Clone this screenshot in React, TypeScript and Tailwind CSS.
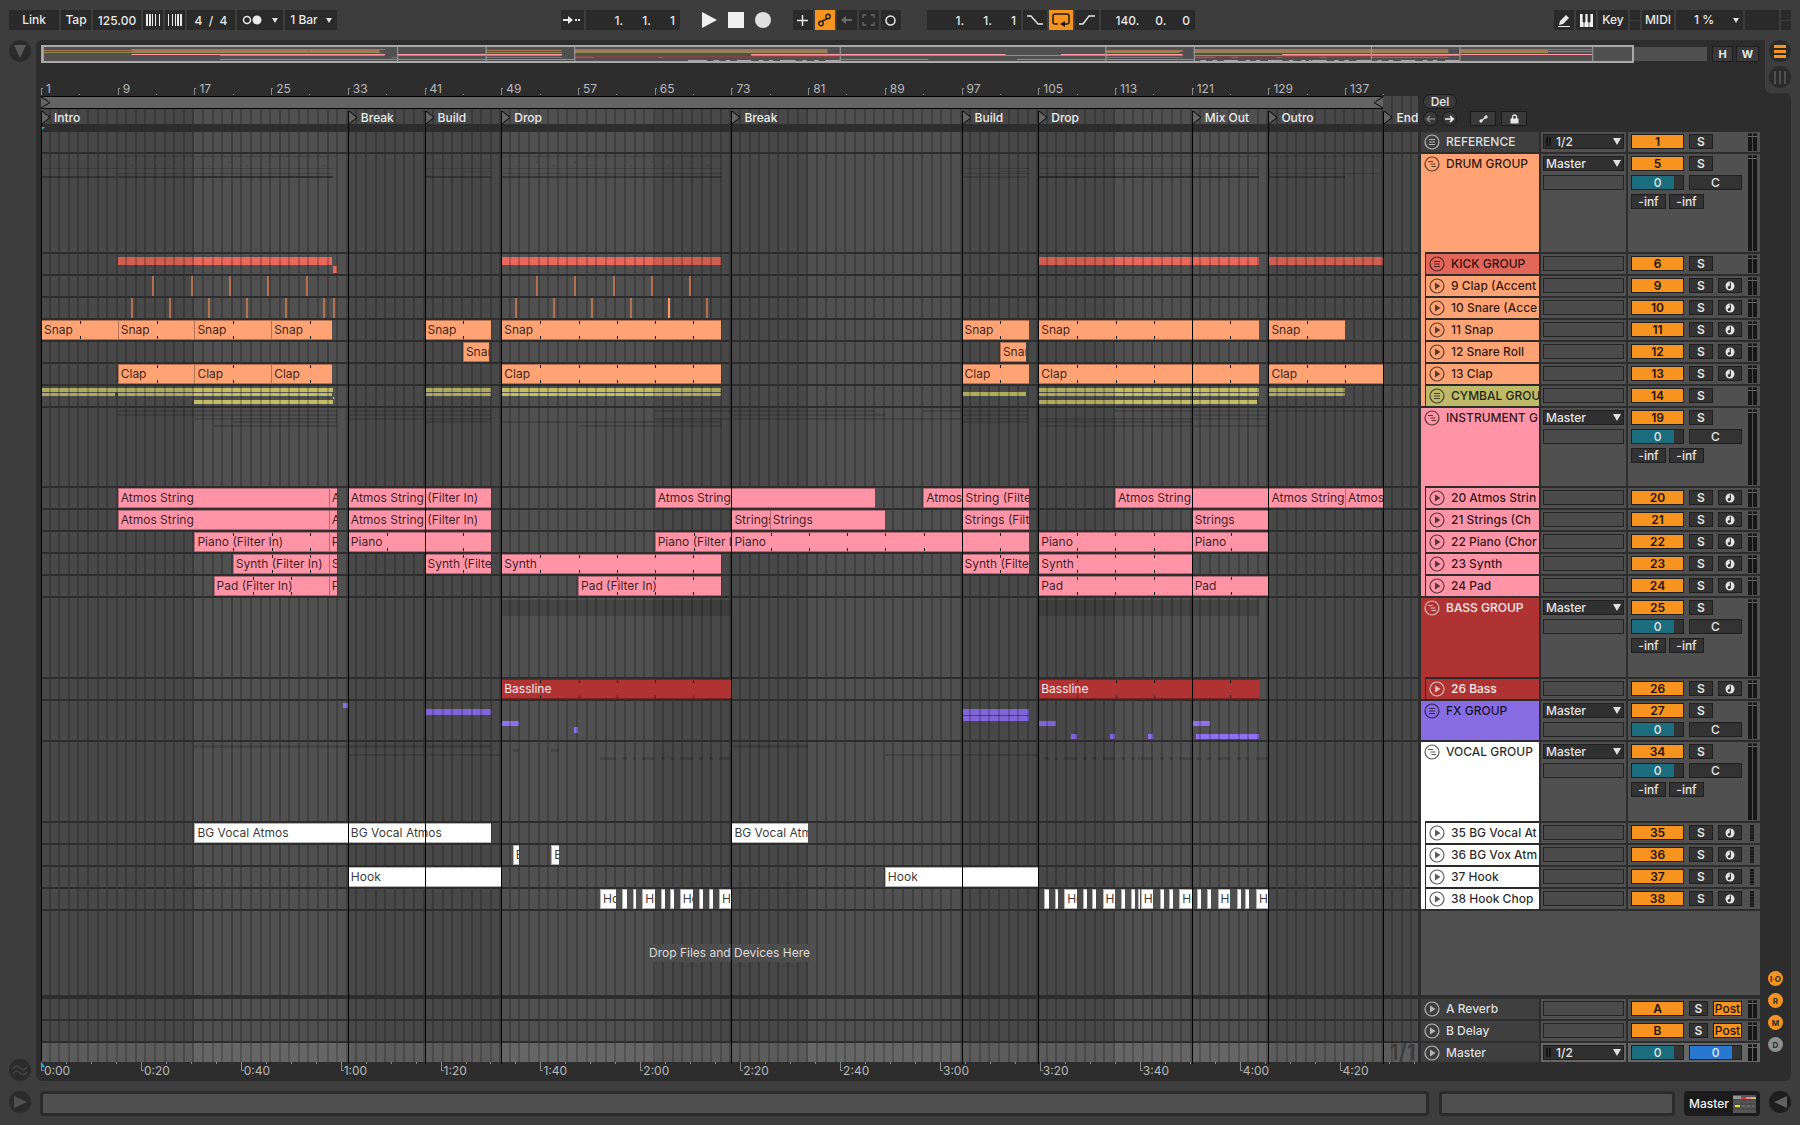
import { type FC, type ReactNode } from "react";
import clsx from "clsx";

const BARS = 143.6;
const BARS_PER_SECOND = 125 / 240;

type Clip = [start: number, end: number, name?: string];
type Strip = [start: number, end: number, top: number, height: number];

interface Track {
  id: string;
  name: string;
  kind: "group" | "folded" | "child" | "return" | "master" | "plain";
  height: string;
  color: string;
  text?: string;
  parent?: string;
  last?: boolean;
  loop?: boolean;
  clips?: Clip[];
  strips?: Strip[];
  stripBg?: string;
  hits?: number[];
  mini?: [top: number, height: number];
  output?: string;
  rec?: boolean;
  dotted?: boolean;
  fader?: number;
  overview?: [top: number, color: string];
}

const ROW = "h-[22px]";
const DRUM = "bg-[#ffa374]";
const PINK = "bg-[#ff94a6]";
const RED = "bg-[#af3333]";
const WHITE = "bg-white";

const drumTracks: Track[] = [
  {
    id: "6", name: "KICK GROUP", kind: "folded", height: ROW, color: "bg-[#e2675a]", parent: DRUM,
    stripBg: "bg-[#e8695c]", mini: [2, 1], overview: [2, "#b5695c"],
    strips: [[9, 31.4, 3, 8], [31.4, 31.9, 12, 7], [49, 71.9, 3, 8], [105, 128, 3, 8], [129, 141, 3, 8]],
  },
  {
    id: "9", name: "9 Clap (Accent", kind: "child", height: ROW, color: DRUM, parent: DRUM, rec: true, mini: [8, 1],
    hits: [12.6, 16.6, 20.6, 24.6, 28.6, 52.6, 56.6, 60.6, 64.6, 68.6],
  },
  {
    id: "10", name: "10 Snare (Acce", kind: "child", height: ROW, color: DRUM, parent: DRUM, rec: true, mini: [11, 1],
    hits: [10.4, 14.4, 18.4, 22.4, 26.4, 30.4, 31.4, 50.4, 54.4, 58.4, 62.4, 66.4, 70.4],
  },
  {
    id: "11", name: "11 Snap", kind: "child", height: ROW, color: DRUM, parent: DRUM, rec: true, loop: true, mini: [14, 1],
    overview: [3, "#a8765b"],
    clips: [[1, 9, "Snap"], [9, 17, "Snap"], [17, 25, "Snap"], [25, 31.4, "Snap"], [41, 47.9, "Snap"], [49, 71.9, "Snap"], [97, 104, "Snap"], [105, 128, "Snap"], [129, 137, "Snap"]],
  },
  {
    id: "12", name: "12 Snare Roll", kind: "child", height: ROW, color: DRUM, parent: DRUM, rec: true, mini: [17, 1],
    clips: [[45, 47.7, "Snare Roll"], [101, 103.7, "Snare Roll"]],
  },
  {
    id: "13", name: "13 Clap", kind: "child", height: ROW, color: DRUM, parent: DRUM, rec: true, loop: true, mini: [19, 1],
    overview: [4, "#a8765b"],
    clips: [[9, 17, "Clap"], [17, 25, "Clap"], [25, 31.4, "Clap"], [49, 71.9, "Clap"], [97, 104, "Clap"], [105, 128, "Clap"], [129, 141, "Clap"]],
  },
  {
    id: "14", name: "CYMBAL GROU", kind: "folded", height: ROW, color: "bg-[#bfba69]", parent: DRUM, last: true,
    stripBg: "bg-[#c3be66]", mini: [22, 2], overview: [5, "#8f8c50"],
    strips: [
      [1, 31.4, 2, 4], [1, 8.7, 7, 3], [9, 31.4, 7, 3], [17, 31.4, 14, 4], [31.4, 31.5, 11, 2],
      [41, 47.9, 2, 4], [41, 47.9, 7, 3], [49, 71.9, 2, 4], [49, 71.9, 7, 3], [97, 103.7, 6, 4],
      [105, 128, 2, 4], [105, 128, 7, 3], [105, 127.8, 14, 4], [129, 137, 2, 4], [129, 137, 7, 3],
    ],
  },
];

const instrumentTracks: Track[] = [
  {
    id: "20", name: "20 Atmos Strin", kind: "child", height: ROW, color: PINK, parent: PINK, rec: true, mini: [2, 2],
    overview: [7, "#ff94a6"],
    clips: [[9, 31, "Atmos String"], [31, 31.9, "Atmos"], [33, 47.9, "Atmos String (Filter In)"], [65, 88, "Atmos String"], [93, 104, "Atmos String (Filter In)"], [113, 129, "Atmos String"], [129, 137, "Atmos String"], [137, 141, "Atmos"]],
  },
  {
    id: "21", name: "21 Strings (Ch", kind: "child", height: ROW, color: PINK, parent: PINK, rec: true, mini: [6, 2],
    clips: [[9, 31, "Atmos String"], [31, 31.9, "Atmos"], [33, 47.9, "Atmos String (Filter In)"], [73, 77, "Strings"], [77, 89, "Strings"], [97, 104, "Strings (Filter In)"], [121, 129, "Strings"]],
  },
  {
    id: "22", name: "22 Piano (Chor", kind: "child", height: ROW, color: PINK, parent: PINK, rec: true, loop: true, mini: [10, 2],
    overview: [8, "#c07582"],
    clips: [[17, 31, "Piano (Filter In)"], [31, 31.9, "Piano"], [33, 47.9, "Piano"], [65, 73, "Piano (Filter In)"], [73, 104, "Piano"], [105, 121, "Piano"], [121, 129, "Piano"]],
  },
  {
    id: "23", name: "23 Synth", kind: "child", height: ROW, color: PINK, parent: PINK, rec: true, loop: true, mini: [13, 2],
    clips: [[21, 31, "Synth (Filter In)"], [31, 31.9, "Synth"], [41, 47.9, "Synth (Filter In)"], [49, 71.9, "Synth"], [97, 104, "Synth (Filter In)"], [105, 121, "Synth"]],
  },
  {
    id: "24", name: "24 Pad", kind: "child", height: ROW, color: PINK, parent: PINK, last: true, rec: true, loop: true, mini: [17, 2],
    clips: [[19, 31, "Pad (Filter In)"], [31, 31.9, "Pad"], [57, 71.9, "Pad (Filter In)"], [105, 121, "Pad"], [121, 129, "Pad"]],
  },
];

const bassTracks: Track[] = [
  {
    id: "26", name: "26 Bass", kind: "child", height: ROW, color: RED, text: "text-white/90", parent: RED, last: true,
    rec: true, loop: true, mini: [2, 16], overview: [9, "#8a4444"],
    clips: [[49, 73, "Bassline"], [105, 128, "Bassline"]],
  },
];

const vocalTracks: Track[] = [
  {
    id: "35", name: "35 BG Vocal At", kind: "child", height: ROW, color: WHITE, parent: WHITE, rec: true, dotted: true,
    mini: [3, 3], overview: [12, "#8a8a8a"],
    clips: [[17, 33, "BG Vocal Atmos"], [33, 47.9, "BG Vocal Atmos"], [73, 81, "BG Vocal Atmos"]],
  },
  {
    id: "36", name: "36 BG Vox Atm", kind: "child", height: ROW, color: WHITE, parent: WHITE, rec: true, dotted: true,
    mini: [7, 3], clips: [[50.2, 50.9, "BG"], [54.2, 55, "BG"]],
  },
  {
    id: "37", name: "37 Hook", kind: "child", height: ROW, color: WHITE, parent: WHITE, rec: true, dotted: true,
    mini: [12, 2], overview: [12, "#8a8a8a"], clips: [[33, 49, "Hook"], [89, 105, "Hook"]],
  },
  {
    id: "38", name: "38 Hook Chop", kind: "child", height: ROW, color: WHITE, parent: WHITE, last: true, rec: true, dotted: true,
    mini: [15, 3], overview: [13, "#a8a8a8"],
    clips: [
      [59.3, 61, "Hook"], [61.6, 62.1], [62.7, 63.1], [63.7, 65, "Hook"], [65.7, 66.1], [66.6, 67],
      [67.6, 69, "Hook"], [69.6, 70], [70.7, 71.1], [71.7, 73, "Hook"],
      [105.6, 106.1], [106.7, 107.1], [107.7, 109, "Hook"], [109.7, 110.1], [110.6, 111], [111.7, 113, "Hook"],
      [113.6, 114], [114.7, 115.1], [115.4, 115.6], [115.7, 117, "Hook"], [117.7, 118.1], [118.6, 119],
      [119.7, 121, "Hook"], [121.6, 122], [122.6, 123], [123.7, 125, "Hook"], [125.7, 126.1], [126.6, 127],
      [127.7, 129, "Hook"],
    ],
  },
];

const fxGroup: Track = {
  id: "27", name: "FX GROUP", kind: "folded", height: "h-[41px]", color: "bg-[#886ce4]", output: "Master", fader: 1,
  stripBg: "bg-[#8f70f0]", overview: [10, "#6c62b8"],
  strips: [
    [32.5, 33, 2, 5], [41, 47.9, 8, 6], [49, 50.8, 20, 5], [56.6, 57, 26, 6], [97, 104, 8, 6], [97, 104, 15, 5],
    [105, 106.9, 20, 5], [108.4, 109, 33, 5], [112.5, 113, 33, 5], [116.4, 117, 33, 5], [121, 122.9, 20, 5],
    [121.4, 128, 33, 5],
  ],
};

const minis = (children: Track[]): Strip[] =>
  children.flatMap((t) => {
    const [top, height] = t.mini ?? [0, 0];
    const spans: Clip[] = t.clips ?? t.strips?.map(([s, e]): Clip => [s, e]) ?? t.hits?.map((h): Clip => [h, h + 0.2]) ?? [];
    return spans.map(([s, e]): Strip => [s, e, top, height]);
  });

const group = (id: string, name: string, height: string, color: string, children: Track[], text?: string): Track[] => [
  { id, name, kind: "group", height, color, text, output: "Master", fader: 2, stripBg: "bg-black/15", strips: minis(children) },
  ...children,
];

const tracks: Track[] = [
  { id: "1", name: "REFERENCE", kind: "plain", height: ROW, color: "bg-[#3f3f3f]", text: "text-[#dedede]", output: "1/2" },
  ...group("5", "DRUM GROUP", "h-[100px]", DRUM, drumTracks),
  ...group("19", "INSTRUMENT G", "h-[80px]", PINK, instrumentTracks),
  ...group("25", "BASS GROUP", "h-[81px]", RED, bassTracks, "text-white/90"),
  fxGroup,
  ...group("34", "VOCAL GROUP", "h-[81px]", WHITE, vocalTracks),
];

const returns: Track[] = [
  { id: "A", name: "A Reverb", kind: "return", height: ROW, color: "bg-[#3f3f3f]", text: "text-[#dedede]" },
  { id: "B", name: "B Delay", kind: "return", height: ROW, color: "bg-[#3f3f3f]", text: "text-[#dedede]" },
  { id: "M", name: "Master", kind: "master", height: "h-[21px]", color: "bg-[#3f3f3f]", text: "text-[#dedede]", output: "1/2" },
];

const locators: [number, string][] = [
  [1, "Intro"], [33, "Break"], [41, "Build"], [49, "Drop"], [73, "Break"], [97, "Build"],
  [105, "Drop"], [121, "Mix Out"], [129, "Outro"], [141, "End"],
];

const at = (bar: number) => `${((bar - 1) / BARS) * 100}%`;
const span = (start: number, end: number) => ({ left: at(start), width: `${((end - start) / BARS) * 100}%` });

const Grid: FC = () => (
  <div className="pointer-events-none absolute inset-0 bg-[repeating-linear-gradient(to_right,rgba(0,0,0,.1)_0,rgba(0,0,0,.1)_11.142%,transparent_11.142%,transparent_22.284%),repeating-linear-gradient(to_right,transparent_0,transparent_calc(0.69638%_-_2px),rgba(0,0,0,.2)_calc(0.69638%_-_2px),rgba(0,0,0,.2)_0.69638%)]" />
);

const CueLines: FC = () => (
  <>
    {locators.map(([bar]) => (
      <div key={bar} className="pointer-events-none absolute inset-y-0 w-px bg-black" style={{ left: at(bar) }} />
    ))}
  </>
);

/* ---------- Control bar ---------- */

const Btn: FC<{ w: string; label: string; children?: ReactNode; on?: boolean }> = ({ w, label, children, on }) => (
  <button
    type="button"
    aria-label={label}
    className={clsx(
      "flex h-5 shrink-0 items-center justify-center text-[12px] leading-none font-medium",
      w,
      on ? "bg-[#f7941f] text-[#1a1a1a]" : "bg-[#2a2a2a] text-[#e8e8e8]",
    )}
  >
    {children}
  </button>
);

const Field: FC<{ w: string; label: string; value: string; right?: boolean }> = ({ w, label, value, right }) => (
  <input
    aria-label={label}
    defaultValue={value}
    className={clsx(
      "h-5 shrink-0 bg-[#2a2a2a] text-[12px] font-medium whitespace-pre text-[#e8e8e8] outline-none",
      w,
      right ? "pr-[5px] text-right" : "text-center",
    )}
  />
);

const Indicators: FC<{ w: string }> = ({ w }) => (
  <div className={clsx("flex h-5 shrink-0 flex-col gap-px", w)}>
    <div className="flex-1 bg-[#2a2a2a]" />
    <div className="flex-1 bg-[#2a2a2a]" />
  </div>
);

const Caret: FC = () => (
  <svg width="6" height="5" viewBox="0 0 6 5" fill="#e0e0e0">
    <path d="M0 0h6L3 5z" />
  </svg>
);

const ControlBar: FC = () => (
  <header className="flex h-10 items-center gap-[2px] px-[9px]">
    <Btn w="w-[50px]" label="Link">Link</Btn>
    <Btn w="w-[30px]" label="Tap">Tap</Btn>
    <Field w="w-12" label="Tempo" value="125.00" />
    <Btn w="w-5" label="Nudge down">
      <svg width="14" height="12" fill="#e8e8e8"><path d="M0 0h2v12H0zM3 0h2v12H3zM6 0h1v12H6zM9 0h1v12H9zM13 0h1v12h-1z" /></svg>
    </Btn>
    <Btn w="w-5" label="Nudge up">
      <svg width="14" height="12" fill="#e8e8e8"><path d="M0 0h1v12H0zM4 0h1v12H4zM7 0h1v12H7zM9 0h2v12H9zM12 0h2v12h-2z" /></svg>
    </Btn>
    <Field w="w-12" label="Time signature" value="4  /  4" />
    <Btn w="w-[46px]" label="Metronome">
      <span className="flex items-center gap-[10px]">
        <svg width="20" height="10" viewBox="0 0 20 10">
          <circle cx="5" cy="5" r="3.5" fill="none" stroke="#e8e8e8" strokeWidth="1.5" />
          <circle cx="15" cy="5" r="4.5" fill="#e8e8e8" />
        </svg>
        <Caret />
      </span>
    </Btn>
    <Btn w="w-[52px]" label="Quantization">
      <span className="flex items-center gap-2 whitespace-nowrap">1 Bar <Caret /></span>
    </Btn>

    <div className="flex-[223]" />

    <Btn w="w-[23px]" label="Follow">
      <svg width="18" height="10" viewBox="0 0 18 10" fill="#e8e8e8"><path d="M0 4h5V1l5 4-5 4V6H0zM12 4h2v2h-2zM15 4h2v2h-2z" /></svg>
    </Btn>
    <Field w="w-[94px]" label="Arrangement position" value="1.      1.      1" right />
    <div className="flex items-center gap-[11px] px-5">
      <button type="button" aria-label="Play"><svg width="15" height="16" fill="#f0f0f0"><path d="M0 0v16L15 8z" /></svg></button>
      <button type="button" aria-label="Stop" className="size-4 bg-[#f0f0f0]" />
      <button type="button" aria-label="Record" className="size-4 rounded-full bg-[#e0e0e0]" />
    </div>
    <Btn w="w-5" label="Overdub">
      <svg width="11" height="11" stroke="#e8e8e8" strokeWidth="1.5"><path d="M5.5 0v11M0 5.5h11" /></svg>
    </Btn>
    <Btn w="w-5" label="Automation arm" on>
      <svg width="13" height="14" viewBox="0 0 13 14" fill="none" stroke="#1a1a1a" strokeWidth="1.4">
        <circle cx="3" cy="10.5" r="2.2" /><circle cx="10" cy="3.5" r="2.2" /><path d="M4 8.7C5 6 8 8 9 5.3" />
      </svg>
    </Btn>
    <Btn w="w-5" label="Re-enable automation">
      <svg width="11" height="10" viewBox="0 0 11 10" fill="#6a6a6a"><path d="M11 4H5V1L0 5l5 4V6h6z" /></svg>
    </Btn>
    <Btn w="w-5" label="Capture">
      <svg width="13" height="12" viewBox="0 0 13 12" fill="none" stroke="#6a6a6a" strokeWidth="1.3"><path d="M1 4V1h3M9 1h3v3M12 8v3H9M4 11H1V8" /></svg>
    </Btn>
    <Btn w="w-5" label="Session record">
      <svg width="11" height="11" fill="none" stroke="#e8e8e8" strokeWidth="1.5"><circle cx="5.5" cy="5.5" r="4.5" /></svg>
    </Btn>
    <div className="w-[22px]" />
    <Field w="w-[94px]" label="Loop start" value="1.      1.      1" right />
    <Btn w="w-6" label="Punch in">
      <svg width="16" height="10" fill="none" stroke="#e8e8e8" strokeWidth="1.4"><path d="M0 1h4l7 8h5" /></svg>
    </Btn>
    <Btn w="w-6" label="Loop" on>
      <svg width="18" height="14" viewBox="0 0 18 14" fill="none" stroke="#1a1a1a" strokeWidth="1.5">
        <path d="M6 11H3a2 2 0 0 1-2-2V3a2 2 0 0 1 2-2h12a2 2 0 0 1 2 2v6a2 2 0 0 1-2 2h-2" />
        <path d="M13 8v6l-5-3z" fill="#1a1a1a" stroke="none" />
      </svg>
    </Btn>
    <Btn w="w-6" label="Punch out">
      <svg width="16" height="10" fill="none" stroke="#e8e8e8" strokeWidth="1.4"><path d="M0 9h4l6-8h6" /></svg>
    </Btn>
    <Field w="w-[94px]" label="Loop length" value="140.     0.     0" right />

    <div className="flex-[360]" />

    <Btn w="w-5" label="Draw mode">
      <svg width="14" height="13" viewBox="0 0 14 13" fill="#e8e8e8"><path d="M2 11l1-4 6-6 3 3-6 6-4 1zM1 12h12v1H1z" /></svg>
    </Btn>
    <Btn w="w-5" label="Computer MIDI keyboard">
      <svg width="13" height="13" viewBox="0 0 13 13"><path d="M0 0h13v13H0z" fill="#f0f0f0" /><path d="M3 0h2v8H3zM8 0h2v8H8zM4 8v5M9 8v5" stroke="#2a2a2a" fill="#2a2a2a" strokeWidth=".7" /></svg>
    </Btn>
    <Btn w="w-[30px]" label="Key">Key</Btn>
    <Indicators w="w-[10px]" />
    <Btn w="w-8" label="MIDI">MIDI</Btn>
    <Btn w="w-[67px]" label="CPU load">
      <span className="flex w-full items-center justify-between pr-1 pl-[18px]">1 % <Caret /></span>
    </Btn>
    <div className="h-5 w-[34px] shrink-0 bg-[#2a2a2a]" />
    <Indicators w="w-[10px]" />
  </header>
);

/* ---------- Overview and rulers ---------- */

const Overview: FC = () => {
  const all = [...drumTracks, ...instrumentTracks, ...bassTracks, fxGroup, ...vocalTracks];
  return (
    <div className="flex h-[18px] items-center">
      <div className="h-full min-w-0 flex-1 border-2 border-[#a9a9a9] bg-[#505050]">
        <svg className="block h-full w-full" viewBox="0 0 143.6 14" preserveAspectRatio="none">
          {all.map((t) => {
            if (!t.overview) return null;
            const [y, fill] = t.overview;
            const spans = t.clips ?? t.strips ?? [];
            return spans.map(([s, e], i) => (
              <rect key={`${t.id}-${i}`} x={s - 1} y={y} width={e - s} height={1} fill={fill} />
            ));
          })}
          {locators.map(([bar]) => (
            <rect key={bar} x={bar - 1} y="0" width=".1" height="14" fill="#999" />
          ))}
        </svg>
      </div>
      <div className="h-[14px] w-[73px] bg-[#505050]" />
      <button type="button" className="ml-[5px] h-[16px] w-[21px] border border-[#1f1f1f] bg-[#3a3a3a] text-[11px] leading-none font-bold text-[#e8e8e8]">H</button>
      <button type="button" className="mr-px ml-[3px] h-[16px] w-[23px] border border-[#1f1f1f] bg-[#3a3a3a] text-[11px] leading-none font-bold text-[#e8e8e8]">W</button>
    </div>
  );
};

const BarRuler: FC = () => (
  <div className="relative h-[15px]">
    {Array.from({ length: 18 }, (_, i) => 1 + i * 8).map((bar) => (
      <div key={bar} className="absolute bottom-0 h-full" style={{ left: at(bar) }}>
        <div className="absolute bottom-[1px] left-0 h-[7px] w-[2px] border-t border-l border-[#8a8a8a]" />
        <span className="absolute top-0 left-[5px] text-[12px] leading-[15px] text-[#b8b8b8]">{bar}</span>
      </div>
    ))}
    {Array.from({ length: 18 }, (_, i) => 5 + i * 8).map((bar) => (
      <div key={bar} className="absolute bottom-[1px] size-px bg-[#8a8a8a]" style={{ left: at(bar) }} />
    ))}
  </div>
);

const LoopBrace: FC = () => (
  <div className="absolute top-0 h-[13px] border-y border-black bg-[#646464]" style={span(1, 141)}>
    <svg className="absolute top-0 left-0" width="10" height="11" fill="#646464" stroke="#000"><path d="M0 0l9 5.5L0 11" /></svg>
    <svg className="absolute top-0 right-0" width="10" height="11" fill="#646464" stroke="#000"><path d="M10 0L1 5.5l9 5.5" /></svg>
  </div>
);

const Locators: FC = () => (
  <div className="relative mb-2 h-7 overflow-hidden bg-[#505050]">
    <Grid />
    <LoopBrace />
    {locators.map(([bar, name]) => (
      <div key={bar} className="absolute top-[15px] flex h-[13px] items-center gap-[3px] border-l border-black" style={{ left: at(bar) }}>
        <svg width="9" height="13" fill="#646464" stroke="#000"><path d="M0 0l8 6.5L0 13" /></svg>
        <span className="text-[12px] leading-[14px] font-medium whitespace-nowrap text-[#ececec]">{name}</span>
      </div>
    ))}
  </div>
);

const TimeRuler: FC = () => (
  <div className="relative h-[19px] overflow-hidden">
    {Array.from({ length: 56 }, (_, i) => i * 5).map((sec) => {
      const major = sec % 20 === 0;
      return (
        <div key={sec} className="absolute top-0" style={{ left: at(1 + sec * BARS_PER_SECOND) }}>
          <div className={clsx("border-l border-[#8a8a8a]", major ? "h-[9px] w-[3px] border-b" : "h-[2px] w-px")} />
          {major && (
            <span className="absolute top-0 left-[3px] text-[12px] leading-[17px] text-[#b8b8b8]">
              {Math.floor(sec / 60)}:{String(sec % 60).padStart(2, "0")}
            </span>
          )}
        </div>
      );
    })}
    <svg className="absolute top-0 left-0" width="4" height="6" fill="#29b6d8"><path d="M0 0l4 5H0z" /></svg>
  </div>
);

/* ---------- Timeline lanes ---------- */

const ClipBox: FC<{ clip: Clip; track: Track }> = ({ clip: [start, end, name], track }) => {
  const ticks: number[] = [];
  if (track.loop) for (let b = start + 4; b < end - 0.5; b += 4) ticks.push(b);
  return (
    <div
      className={clsx("absolute inset-y-0 overflow-hidden border-y border-l border-black/30", track.color)}
      style={span(start, end)}
    >
      {ticks.map((b) => (
        <div
          key={b}
          className="absolute inset-y-0 w-px bg-[linear-gradient(#1a1a1a_0_3px,transparent_3px_calc(100%_-_3px),#1a1a1a_calc(100%_-_3px))]"
          style={{ left: `${((b - start) / (end - start)) * 100}%` }}
        />
      ))}
      {name && (
        <span className={clsx("absolute left-[2px] text-[12px] leading-[18px] whitespace-nowrap", track.text ?? "text-black/80")}>
          {name}
        </span>
      )}
    </div>
  );
};

const Lane: FC<{ track: Track }> = ({ track }) => (
  <div className={clsx("relative mb-[2px] min-w-0 flex-1 overflow-hidden", track.kind === "master" ? "bg-[#666]" : "bg-[#505050]")}>
    {track.strips?.map(([s, e, top, height], i) => (
      <div key={i} className={clsx("absolute", track.stripBg)} style={{ ...span(s, e), top, height }} />
    ))}
    <Grid />
    {track.hits?.map((h) => (
      <div key={h} className={clsx("absolute inset-y-0 w-[2px]", h === 66.4 ? "bg-[#ff9a66]" : "bg-[#b3714f]")} style={{ left: at(h) }} />
    ))}
    {track.clips?.map((c) => <ClipBox key={c[0]} clip={c} track={track} />)}
    {track.kind === "master" && (
      <span className="absolute right-[2px] bottom-0 text-[22px] leading-[19px] font-medium text-[#3a3a3a]">1/1</span>
    )}
  </div>
);

/* ---------- Track headers ---------- */

const TrackIcon: FC<{ track: Track }> = ({ track }) => (
  <svg width="16" height="16" viewBox="0 0 16 16" fill="none" stroke="currentColor" strokeWidth="1.2" className="shrink-0 opacity-75">
    <circle cx="8" cy="8" r="7" />
    {track.kind === "group" && <path d="M4 5.5h5M6.5 8h5M7.5 10.5H12" />}
    {(track.kind === "folded" || track.kind === "plain") && <path d="M5 5.5h6M5 8h6M5 10.5h6" />}
    {(track.kind === "child" || track.kind === "return" || track.kind === "master") && (
      <path d="M6 4.5v7L11.5 8z" fill="currentColor" stroke="none" />
    )}
  </svg>
);

const NameCell: FC<{ track: Track }> = ({ track }) => {
  const text = track.text ?? "text-black/85";
  const label = (
    <div className={clsx("flex h-5 items-center gap-[6px] overflow-hidden pl-[3px] text-[12px] leading-5 font-medium whitespace-nowrap", text)}>
      <button type="button" aria-label={`Unfold ${track.name}`}><TrackIcon track={track} /></button>
      <span>{track.name}</span>
    </div>
  );
  if (track.parent) {
    return (
      <div className={clsx("ml-[3px] w-[118px] shrink-0 pl-1", track.parent, track.last && "mb-[2px]")}>
        <div className={clsx("h-full border-l border-[#2b2b2b]", !track.last && "border-b-2", track.color)}>{label}</div>
      </div>
    );
  }
  return (
    <div className={clsx("ml-[3px] flex w-[118px] shrink-0 flex-col", track.color, track.kind !== "group" && "mb-[2px]")}>
      <div className="flex-1">{label}</div>
      {track.kind === "group" && <div className="ml-1 h-[2px] bg-[#2b2b2b]" />}
    </div>
  );
};

const Chooser: FC<{ label: string; value: string }> = ({ label, value }) => (
  <div className="relative h-[15px]">
    <select
      aria-label={label}
      defaultValue={value}
      className={clsx(
        "block h-[15px] w-full appearance-none border border-[#1f1f1f] bg-[#303030] py-0 text-[12px] leading-[13px] font-medium text-[#e4e4e4] outline-none",
        value === "1/2" ? "pl-3" : "pl-[2px]",
      )}
    >
      <option>{value}</option>
    </select>
    {value === "1/2" && (
      <div className="pointer-events-none absolute top-[3px] left-[3px] flex h-[9px] gap-px">
        <div className="w-[2px] bg-[#151515]" />
        <div className="w-[2px] bg-[#151515]" />
      </div>
    )}
    <svg className="pointer-events-none absolute top-[4px] right-[3px]" width="8" height="7" fill="#e0e0e0"><path d="M0 0h8L4 7z" /></svg>
  </div>
);

const IoCell: FC<{ track: Track }> = ({ track }) => (
  <div className={clsx("mb-[2px] ml-[2px] flex w-[85px] shrink-0 flex-col gap-1 px-[2px] pt-[2px]", track.kind === "master" ? "bg-[#666]" : "bg-[#505050]")}>
    {track.output && <Chooser label={`${track.name} output`} value={track.output} />}
    {(!track.output || track.output === "Master") && <div className="h-[15px] border border-[#232323] bg-[#4b4b4b]" />}
  </div>
);

const Box: FC<{ w: string; label: string; children: ReactNode; on?: boolean; bold?: boolean }> = ({ w, label, children, on, bold }) => (
  <button
    type="button"
    aria-label={label}
    className={clsx(
      "flex h-[15px] shrink-0 items-center justify-center border border-[#1f1f1f] text-[12px] leading-none",
      w,
      bold ? "font-semibold" : "font-medium",
      on ? "bg-[#f7941f] text-[#1d1206]" : "bg-[#333] text-[#e4e4e4]",
    )}
  >
    {children}
  </button>
);

const Fader: FC<{ label: string; blue?: boolean }> = ({ label, blue }) => (
  <input
    aria-label={label}
    defaultValue="0"
    className={clsx(
      "h-[15px] w-[53px] shrink-0 border border-[#1f1f1f] text-center text-[12px] leading-none font-medium text-[#e4e4e4] outline-none",
      blue
        ? "bg-[linear-gradient(to_right,#2878d0_82%,#333_82%)]"
        : "bg-[linear-gradient(to_right,#1c6d7e_82%,#333_82%)]",
    )}
  />
);

const NoteIcon: FC = () => (
  <svg width="10" height="10" viewBox="0 0 10 10">
    <circle cx="5" cy="5" r="4.5" fill="#e4e4e4" />
    <path d="M5.3 1.5v5" stroke="#333" strokeWidth="1.2" />
    <circle cx="4.2" cy="6.5" r="1.5" fill="#333" />
  </svg>
);

const Meter: FC<{ dotted?: boolean }> = ({ dotted }) =>
  dotted ? (
    <div className="my-[2px] mr-[6px] ml-auto w-1 bg-[repeating-linear-gradient(#181818_0_2px,#303030_2px_3px)]" />
  ) : (
    <div className="my-px mr-[3px] ml-auto flex gap-px">
      <div className="w-1 border-t border-[#2a2a2a] bg-[linear-gradient(#1a1a1a_2px,#666_2px_3px,#161616_3px)]" />
      <div className="w-1 border-t border-[#2a2a2a] bg-[linear-gradient(#1a1a1a_2px,#666_2px_3px,#161616_3px)]" />
    </div>
  );

const MixerCell: FC<{ track: Track }> = ({ track }) => (
  <div className={clsx("mb-[2px] ml-[2px] flex w-[132px] shrink-0", track.kind === "master" ? "bg-[#666]" : "bg-[#505050]")}>
    <div className="flex flex-col gap-1 pt-[2px] pl-[3px]">
      {track.kind === "master" ? (
        <div className="flex gap-[5px]">
          <Fader label="Master volume" />
          <Fader label="Cue volume" blue />
        </div>
      ) : (
        <div className="flex gap-[5px]">
          <Box w="w-[53px]" label={`Track ${track.id} on`} on bold>{track.id}</Box>
          <Box w={track.kind === "return" ? "w-[19px]" : "w-6"} label={`Solo ${track.id}`} bold>S</Box>
          {track.rec && <Box w="w-6" label={`Arm ${track.id}`}><NoteIcon /></Box>}
          {track.kind === "return" && <Box w="w-[29px]" label={`Post ${track.id}`} on>Post</Box>}
        </div>
      )}
      {track.fader && (
        <div className="flex gap-[5px]">
          <Fader label={`${track.name} volume`} />
          <Box w="w-[53px]" label={`${track.name} pan`}>C</Box>
        </div>
      )}
      {track.fader === 2 && (
        <div className="flex gap-[3px]">
          <Box w="w-[35px]" label={`${track.name} send A`}>-inf</Box>
          <Box w="w-[35px]" label={`${track.name} send B`}>-inf</Box>
        </div>
      )}
    </div>
    <Meter dotted={track.dotted} />
  </div>
);

const TrackRow: FC<{ track: Track }> = ({ track }) => (
  <div className={clsx("flex", track.height)}>
    <Lane track={track} />
    <NameCell track={track} />
    <IoCell track={track} />
    <MixerCell track={track} />
  </div>
);

const LocatorControls: FC = () => (
  <div className="flex w-[342px] shrink-0 flex-col gap-[2px] pt-[13px] pl-[5px]">
    <button type="button" className="h-[15px] w-[34px] rounded-full border border-[#1a1a1a] bg-[#3a3a3a] text-[12px] leading-none font-medium text-[#e8e8e8]">Del</button>
    <div className="flex items-center">
      <button type="button" aria-label="Previous locator" className="flex size-[15px] items-center justify-center rounded-full border border-[#1a1a1a] bg-[#3a3a3a]">
        <svg width="9" height="8" viewBox="0 0 9 8" fill="none" stroke="#808080" strokeWidth="1.5"><path d="M9 4H1M4 1L1 4l3 3" /></svg>
      </button>
      <button type="button" aria-label="Next locator" className="ml-1 flex size-[15px] items-center justify-center rounded-full border border-[#1a1a1a] bg-[#3a3a3a]">
        <svg width="9" height="8" viewBox="0 0 9 8" fill="none" stroke="#f0f0f0" strokeWidth="1.7"><path d="M0 4h8M5 1l3 3-3 3" /></svg>
      </button>
      <button type="button" aria-label="Automation mode" className="ml-[13px] flex h-[15px] w-[26px] items-center justify-center border border-[#1a1a1a] bg-[#3a3a3a]">
        <svg width="9" height="8" viewBox="0 0 9 8" fill="#e8e8e8" stroke="#e8e8e8"><circle cx="2" cy="6" r="1.2" /><circle cx="7" cy="2" r="1.2" /><path d="M2 6l5-4" strokeWidth="1.3" /></svg>
      </button>
      <button type="button" aria-label="Lock envelopes" className="ml-[5px] flex h-[15px] w-[26px] items-center justify-center border border-[#1a1a1a] bg-[#3a3a3a]">
        <svg width="9" height="10" viewBox="0 0 9 10" fill="#e8e8e8"><path d="M.5 4.5h8v5h-8z" /><path d="M2.5 5V3a2 2 0 0 1 4 0v2" fill="none" stroke="#e8e8e8" strokeWidth="1.3" /></svg>
      </button>
    </div>
  </div>
);

const Arrangement: FC = () => (
  <main className="flex min-w-0 flex-1 flex-col rounded-l-md bg-[#2d2d2d] px-[5px] pt-[5px]">
    <Overview />
    <div className="mt-[18px] flex">
      <div className="min-w-0 flex-1">
        <BarRuler />
        <Locators />
      </div>
      <LocatorControls />
    </div>
    <div className="relative -mt-2 flex flex-col">
      <svg className="absolute top-[3px] left-0" width="4" height="4" fill="#29b6d8"><path d="M0 0h4L0 4z" /></svg>
      <div className="pt-2">
        {tracks.map((t) => <TrackRow key={t.id} track={t} />)}
        <div className="flex h-[88px]">
          <div className="relative mb-[4px] flex min-w-0 flex-1 items-center justify-center bg-[#505050]">
            <Grid />
            <span className="relative bg-[#4d4d4d] text-[12px] text-[#dcdcdc]">Drop Files and Devices Here</span>
          </div>
          <div className="mb-[4px] ml-[3px] w-[339px] shrink-0 bg-[#505050]" />
        </div>
        {returns.map((t) => <TrackRow key={t.id} track={t} />)}
      </div>
      <div className="pointer-events-none absolute inset-y-0 right-[342px] left-0"><CueLines /></div>
    </div>
    <div className="-mt-[2px] flex">
      <div className="min-w-0 flex-1"><TimeRuler /></div>
      <div className="w-[342px] shrink-0" />
    </div>
  </main>
);

/* ---------- Side rails and status bar ---------- */

const RoundButton: FC<{ label: string; children: ReactNode }> = ({ label, children }) => (
  <button type="button" aria-label={label} className="flex size-[22px] items-center justify-center rounded-full bg-[#2b2b2b]">
    {children}
  </button>
);

const viewToggles = [
  ["I·O", "bg-[#f7941f]"],
  ["R", "bg-[#f7941f]"],
  ["M", "bg-[#f7941f]"],
  ["D", "bg-[#8f8f8f]"],
];

const RightRail: FC = () => (
  <div className="flex w-[26px] shrink-0 flex-col">
    <div className="h-[53px] bg-[#2d2d2d]">
      <div className="flex h-full flex-col items-end gap-1 rounded-bl-md bg-[#3d3d3d]">
        <RoundButton label="Arrangement view">
          <svg width="12" height="13" fill="#f7941f"><path d="M0 0h12v3H0zM0 5h12v3H0zM0 10h12v3H0z" /></svg>
        </RoundButton>
        <RoundButton label="Session view">
          <svg width="12" height="13" fill="#505050"><path d="M0 0h2v13H0zM5 0h2v13H5zM10 0h2v13h-2z" /></svg>
        </RoundButton>
      </div>
    </div>
    <div className="flex flex-1 flex-col justify-end gap-[7px] rounded-r-md bg-[#2d2d2d] pb-[29px] pl-[3px]">
      {viewToggles.map(([name, bg]) => (
        <button key={name} type="button" className={clsx("size-[15px] rounded-full text-[8px] leading-none font-bold text-[#2d2d2d]", bg)}>
          {name}
        </button>
      ))}
    </div>
  </div>
);

const StatusBar: FC = () => (
  <footer className="flex h-11 items-start px-[9px] pt-[10px]">
    <RoundButton label="Show clip view">
      <svg width="13" height="12" fill="#505050"><path d="M0 0v12l13-6z" /></svg>
    </RoundButton>
    <div className="ml-[9px] h-[25px] flex-1 rounded-[4px] border-3 border-[#2b2b2b] bg-[#505050]" />
    <div className="ml-[10px] h-[25px] w-[236px] rounded-[4px] border-3 border-[#2b2b2b] bg-[#505050]" />
    <button type="button" className="ml-[9px] flex h-[25px] w-[76px] items-center gap-1 rounded-[4px] bg-[#1b1b1b] pl-[5px] text-[12px] font-medium text-[#f0f0f0]">
      Master
      <svg width="23" height="18" viewBox="0 0 23 18">
        <path d="M0 0h23v18H0z" fill="#555" />
        <path d="M0 1h8v3H0z" fill="#8f979c" />
        <path d="M8 2h5v2H8z" fill="#d33" />
        <path d="M13 2h5v2h-5z" fill="#f07a9a" />
        <path d="M18 2h5v2h-5z" fill="#c3be66" />
        <path d="M2 10h5v2H2z" fill="#f2e600" />
        <path d="M0 5h23M0 9h23M0 14h23" stroke="#444" />
        <path d="M9 11h12" stroke="#777" strokeDasharray="3 2" />
      </svg>
    </button>
    <div className="ml-[9px]">
      <button type="button" aria-label="Show device view" className="flex size-[22px] items-center justify-center rounded-full bg-[#1e1e1e]">
        <svg width="13" height="12" fill="#606060"><path d="M13 0v12L0 6z" /></svg>
      </button>
    </div>
  </footer>
);

const App: FC = () => (
  <div className="flex min-h-screen flex-col bg-[#3d3d3d] font-['Inter','Liberation_Sans',sans-serif]">
    <ControlBar />
    <div className="flex flex-1 pr-[9px]">
      <div className="flex w-9 shrink-0 flex-col justify-between pl-[9px]">
        <RoundButton label="Show browser">
          <svg width="12" height="13" fill="#585858"><path d="M0 0h12L6 13z" /></svg>
        </RoundButton>
        <RoundButton label="Groove pool">
          <svg width="14" height="11" viewBox="0 0 14 11" fill="none" stroke="#444" strokeWidth="1.5"><path d="M0 4c3-5 5-3 7-1s4 3 7-1M0 9c3-5 5-3 7-1s4 3 7-1" /></svg>
        </RoundButton>
      </div>
      <Arrangement />
      <RightRail />
    </div>
    <StatusBar />
  </div>
);

export default App;
